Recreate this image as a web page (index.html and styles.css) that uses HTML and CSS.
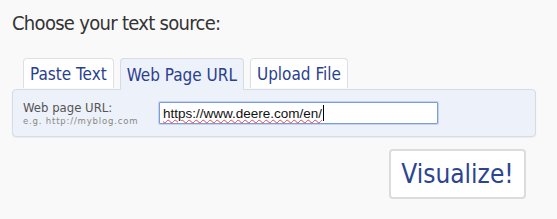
FILE: index.html
```html
<!DOCTYPE html>
<html lang="en">

<head>
    <meta charset="UTF-8">
    <title>Choose your text source</title>
    <link rel="stylesheet" href="styles.css">
</head>

<body>
    <div class="source-box">
        <h2 class="source-title">Choose your text source:</h2>
        <div class="tabs">
            <div class="tab">Paste Text</div>
            <div class="tab active">Web Page URL</div>
            <div class="tab">Upload File</div>
        </div>
        <div class="tab-panel">
            <label class="field-label" for="url">
                Web page URL:
                <span class="field-hint">e.g. http://myblog.com</span>
            </label>
            <div id="url" class="url-input" contenteditable="true" spellcheck="false"><span class="misspelled">https://www.deere.com/en/</span><span class="caret"></span></div>
        </div>
        <div class="actions">
            <button class="visualize-button">Visualize!</button>
        </div>
    </div>
</body>

</html>
```

FILE: styles.css
```css
body {
    margin: 0;
    padding: 0;
    background: #f9f9f9;
    font-family: 'DejaVu Sans', Verdana, sans-serif;
    font-stretch: condensed;
    color: #333;
}

.source-box {
    width: 524px;
    padding: 12px 0 0 12px;
}

.source-title {
    margin: 0;
    font-size: 20px;
    letter-spacing: -0.7px;
    font-weight: normal;
    line-height: 22px;
    color: #333;
}

.tabs {
    display: flex;
    gap: 6px;
    margin: 24px 0 0 11px;
    position: relative;
    z-index: 1;
}

.tab {
    height: 30px;
    padding: 0 6px;
    box-sizing: border-box;
    display: flex;
    align-items: center;
    font-size: 17px;
    color: #2a3f8e;
    background: #fff;
    border: 1px solid #dcdfe5;
    border-bottom: none;
    border-radius: 4px 4px 0 0;
}

.tab.active {
    height: 32px;
    background: #edf1f9;
    border-color: #d6dbe4;
}

.tab-panel {
    height: 48px;
    box-sizing: border-box;
    margin-top: -1px;
    display: flex;
    align-items: center;
    padding: 0 10px 0 10px;
    background: #edf1f9;
    border: 1px solid #d6dbe4;
    border-radius: 4px;
    box-shadow: 0 1px 2px rgba(0, 0, 0, 0.06);
}

.field-label {
    width: 136px;
    font-size: 13px;
    line-height: 15px;
    color: #555;
}

.field-hint {
    display: block;
    font-size: 9.5px;
    line-height: 12px;
    letter-spacing: 0.8px;
    color: #888;
}

.url-input {
    width: 279px;
    height: 22px;
    box-sizing: border-box;
    padding: 0 3px;
    display: flex;
    align-items: center;
    font-family: 'Liberation Sans', Arial, sans-serif;
    font-stretch: normal;
    font-size: 13.5px;
    color: #111;
    background: #fff;
    border: 1px solid #7b9ddc;
    border-radius: 1px;
    box-shadow: 0 0 0 1px rgba(123, 157, 220, 0.35);
    outline: none;
    white-space: nowrap;
}

.misspelled {
    text-decoration: underline wavy #e5484d;
    text-decoration-thickness: 1px;
}

.caret {
    width: 1px;
    height: 16px;
    margin-left: 1px;
    background: #000;
}

.actions {
    display: flex;
    justify-content: flex-end;
    padding-right: 10px;
    margin-top: 12px;
}

.visualize-button {
    width: 137px;
    height: 50px;
    font-family: 'DejaVu Sans', Verdana, sans-serif;
    font-stretch: condensed;
    font-size: 26px;
    color: #2b4590;
    background: #fff;
    border: 2px solid #dcdcdc;
    border-radius: 4px;
    cursor: pointer;
}
```
